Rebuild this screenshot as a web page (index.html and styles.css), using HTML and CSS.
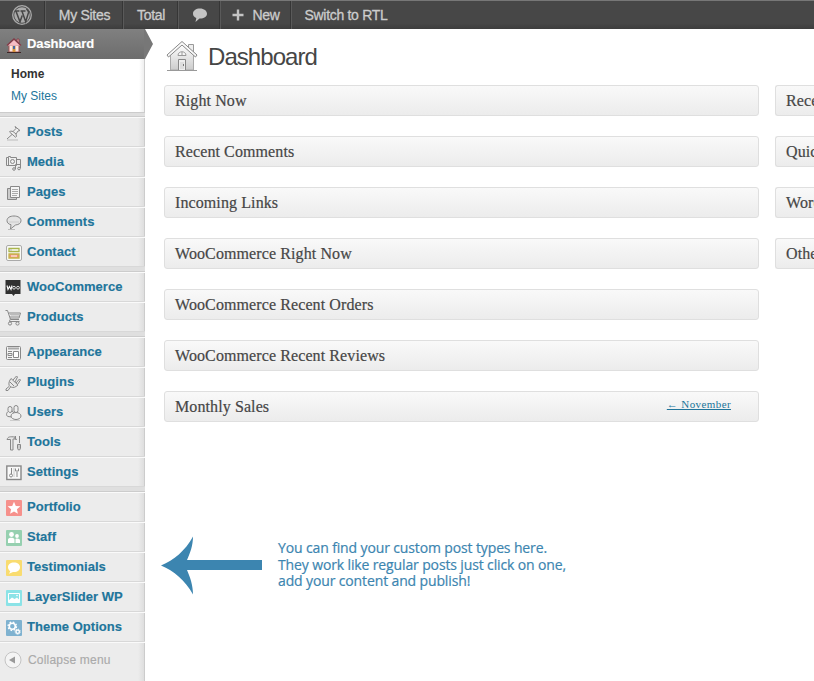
FILE: index.html
```html
<!DOCTYPE html>
<html lang="en">
<head>
<meta charset="utf-8">
<title>Dashboard</title>
<link rel="stylesheet" href="styles.css">
</head>
<body>
<header class="bar">
  <div class="bar-item w-logo"><svg width="22" height="22" viewBox="0 0 22 22"><circle cx="11" cy="11" r="9.3" fill="none" stroke="#aaa" stroke-width="1.3"/><circle cx="11" cy="11" r="7.8" fill="#aaa"/><path d="M3.8 7h4.6M9.5 7h5M5 7.2l4 10.500 2.200-6.300M11 7.200l3.700 10.500 2.800-9c.3-2-1.800-2.500-1.800-4" fill="none" stroke="#464646" stroke-width="1.500"/></svg></div>
  <div class="bar-item w-sites">My Sites</div>
  <div class="bar-item w-total">Total</div>
  <div class="bar-item w-talk"><svg width="16" height="16" viewBox="0 0 16 16"><path d="M8 1.500C4 1.500 1 3.500 1 6.700c0 2 1.300 3.500 3.300 4.300L3.500 15l4-3.500H8c4 0 7-2 7-4.800S12 1.500 8 1.500z" fill="#c4c4c4"/></svg></div>
  <div class="bar-item w-new"><svg width="12" height="12" viewBox="0 0 12 12"><path d="M6 .5v11M.5 6h11" stroke="#c4c4c4" stroke-width="2.400"/></svg><span>New</span></div>
  <div class="bar-item w-rtl">Switch to RTL</div>
</header>
<div class="page">
<nav class="menu">
  <div class="current"><svg class="icon" viewBox="0 0 16 16"><path d="M3 8h10v7H3z" fill="#fde8e2" stroke="#a65555"/><path d="M11 2h2v5h-2z" fill="#e4a5a5" stroke="#813c48" stroke-width=".8"/><path d="M1 8.500L8 2l7 6.500" fill="#f6bdc4" stroke="#813c48" stroke-width="1.500"/><path d="M6.500 9h3v6h-3z" fill="#d8943a"/><path d="M7 9h2v3H7z" fill="#4468a5"/><path d="M1 15.500h14" stroke="#3e2525"/></svg>Dashboard</div>
  <svg class="pointer" viewBox="0 0 9 30"><path d="M0 0h1l8 15-8 15H0z" fill="#777"/></svg>
  <div class="sub"><b>Home</b><span>My Sites</span></div>
  <div class="sep"></div>
  <div class="row"><svg class="icon line" viewBox="0 0 16 16"><path d="M9 1.500l5 4-2 .5-2 3 .5 2.500-1 .7L3.500 7l1-1 2.500.5 3-3z" fill="#eee"/><path d="M6 9.500L1 14M7 6.500l3 2.500"/><path d="M1 15h11" stroke="#bbb"/></svg>Posts</div>
  <div class="row"><svg class="icon line" viewBox="0 0 16 16"><path d="M.5 2.500h2v-1h2v1h6v8H.5zM2.500 2.500v8" fill="#eee"/><circle cx="6.500" cy="6.500" r="2"/><path d="M11 4.500h3.500v8.500M9.500 9.500v4.500M9.500 9.500h5"/><circle cx="8" cy="14" r="1.300"/><circle cx="13" cy="13.500" r="1.300"/></svg>Media</div>
  <div class="row"><svg class="icon line" viewBox="0 0 16 16"><path d="M4 3.500H1.500v11h9V13" fill="#ccc"/><path d="M4.500 1.500h9v11h-9z" fill="#f5f5f5"/><path d="M6 4.500h6M6 6.500h6M6 8.500h6M6 10.500h5" stroke="#aaa"/></svg>Pages</div>
  <div class="row"><svg class="icon line" viewBox="0 0 16 16"><path d="M8 1c-4 0-7 1.600-7 4.700 0 2 1.500 3.500 4 4L4.500 14l5-4c3.500-.3 5.500-2 5.500-4.300C15 3 12 1 8 1z" fill="#e4e4e4"/><path d="M3 7h10" stroke="#ccc"/><path d="M2 14.500h7" stroke="#bbb"/></svg>Comments</div>
  <div class="row"><svg class="icon" viewBox="0 0 16 16"><rect x=".5" y=".5" width="15" height="15" rx="1.500" fill="#f9f9f6" stroke="#aaa"/><path d="M3 3.500h10v3H3z" fill="#fff" stroke="#a9b54b" stroke-width="1.300"/><path d="M5 4.500v1" stroke="#888"/><path d="M3 9h10v4H3z" fill="#f49276" stroke="#c3b44a" stroke-width="1.300"/><path d="M5 11h6" stroke="#fff"/></svg>Contact</div>
  <div class="sep"></div>
  <div class="row"><svg class="icon left" viewBox="0 0 16 16"><path d="M.5 0h15v14h-5.500l-1.500 2L7 14H.5z" fill="#303030"/><path d="M2 5.500l1 4 1.500-3 1.500 3 1-4" fill="none" stroke="#fff" stroke-width="1.100"/><circle cx="9" cy="7.700" r="1.400" fill="none" stroke="#ddd"/><circle cx="13" cy="7.700" r="1.400" fill="none" stroke="#ddd"/></svg>WooCommerce</div>
  <div class="row"><svg class="icon line left" viewBox="0 0 16 16"><path d="M.5.5h2l3 9H14M3.500 3h12l-1.500 5H5M5 9.500l-.5 2h10"/><path d="M5 4.500h10M5 6.500h9M7 3v5M9 3v5M11 3v5M13 3v5" stroke="#bbb"/><circle cx="5" cy="13.500" r="1.600"/><circle cx="12.500" cy="13.500" r="1.600"/></svg>Products</div>
  <div class="sep"></div>
  <div class="row"><svg class="icon line" viewBox="0 0 16 16"><rect x=".5" y="1.500" width="14" height="13" rx="1" fill="#f4f4f4"/><path d="M2 3.500h11" stroke-width="2" stroke="#aaa"/><path d="M7.500 6.500h5v6h-5z" fill="#fff"/><path d="M2 6.500h4M2 8.500h4v2H2zM2 12.500h4"/></svg>Appearance</div>
  <div class="row"><svg class="icon line left" viewBox="0 0 16 16"><path d="M5 5l1-1.500 7 6.500-2 1.500c-2 1.500-4.500 1-6 0s-1.500-4 0-6.500z" fill="#e8e8e8"/><path d="M8 5l3.500-4 1 1L10 7M11 8l3.500-4 1 1L12.500 9.500M5 7l4 4M4 11.500L1 14v1.500h2L5.500 12"/></svg>Plugins</div>
  <div class="row"><svg class="icon line" viewBox="0 0 16 16"><rect x="2" y="1.500" width="4" height="6" rx="2" fill="#eee"/><rect x="8" y=".5" width="4" height="7" rx="2" fill="#eee"/><path d="M2.500 6.500C0 7.500 0 11 2 11.500l4 .5M6 5.500l2 3" fill="#eee"/><ellipse cx="10" cy="11" rx="5" ry="3.500" fill="#f0f0f0"/><path d="M4 15.500h10" stroke="#ccc"/></svg>Users</div>
  <div class="row"><svg class="icon line" viewBox="0 0 16 16"><path d="M1 4.500c1-3 3-3 8-2.500v2H7v11H4.500V4.500zM13.500 1v7" fill="#e6e6e6"/><path d="M9.500 1v3.500h1.300M11.500 9.500h3v4l-1 1.500h-1l-1-1.500z" fill="#ccc"/></svg>Tools</div>
  <div class="row"><svg class="icon line" viewBox="0 0 16 16"><rect x=".8" y="1" width="14.200" height="13.500" fill="#f9f9f9" stroke-width="1.400"/><path d="M5.500 3v6M11 7v5"/><path d="M8 3v9" stroke="#ccc"/><circle cx="5" cy="10.500" r="1.500"/><path d="M9.500 3.500v2.500h3V3.500"/></svg>Settings</div>
  <div class="sep"></div>
  <div class="row"><svg class="icon" viewBox="0 0 16 16"><rect width="16" height="16" rx="1" fill="#f6918c"/><path d="M8 1.700l1.800 4.200 4.600.4-3.500 3 1 4.500L8 11.400l-3.900 2.400 1-4.500-3.500-3 4.600-.4z" fill="#fff"/></svg>Portfolio</div>
  <div class="row"><svg class="icon" viewBox="0 0 16 16"><rect width="16" height="16" rx="1" fill="#96d0b0"/><circle cx="5.500" cy="4.500" r="2.400" fill="#fff"/><circle cx="11" cy="6" r="1.900" fill="#fff"/><path d="M2 13V9.500C2 7 8.500 7 8.500 9.500V13zM9.500 13V9c2-1 4.500-.3 4.500 1.500V13z" fill="#fff"/></svg>Staff</div>
  <div class="row"><svg class="icon" viewBox="0 0 16 16"><rect width="16" height="16" rx="1" fill="#f9dc70"/><path d="M8 2.500c-3.500 0-6 2-6 4.700 0 1.800 1 3.100 2.300 4L3 13.800l4-1.800c4 .5 7-1.500 7-4.800 0-2.700-2.500-4.700-6-4.700z" fill="#fff"/></svg>Testimonials</div>
  <div class="row"><svg class="icon" viewBox="0 0 16 16"><rect width="16" height="16" rx="1" fill="#8be3e7"/><path d="M2.500 3.500h11v9h-11z" fill="none" stroke="#fff"/><path d="M3 10l3-2.500 2.500 1.500L11 7.500l2.500 2.500v2.500H3z" fill="#fff"/><circle cx="11" cy="5.500" r=".8" fill="#fff"/></svg>LayerSlider WP</div>
  <div class="row"><svg class="icon" viewBox="0 0 16 16"><rect width="16" height="16" rx="1" fill="#7fb2d0"/><circle cx="6.300" cy="6.300" r="3" fill="none" stroke="#fff" stroke-width="1.600"/><circle cx="6.300" cy="6.300" r="4.200" fill="none" stroke="#fff" stroke-width="1.300" stroke-dasharray="1.650 1.650"/><circle cx="11.700" cy="11.700" r="1.700" fill="none" stroke="#fff" stroke-width="1.400"/><circle cx="11.700" cy="11.700" r="2.600" fill="none" stroke="#fff" stroke-dasharray="1.020 1.020"/></svg>Theme Options</div>
  <div class="collapse"><svg width="18" height="18" viewBox="0 0 18 18"><circle cx="9" cy="9" r="8" fill="#f4f4f4" stroke="#c4c4c4"/><path d="M5 9l6-3.500v7z" fill="#999"/></svg>Collapse menu</div>
</nav>
<main class="main">
  <div class="title"><svg width="32" height="32" viewBox="0 0 32 32"><defs><linearGradient id="wall" x2="0" y2="1"><stop stop-color="#fff"/><stop offset="1" stop-color="#ccc"/></linearGradient></defs><path d="M22.500 4.500h5v10h-5z" fill="#eee" stroke="#999"/><path d="M4.500 14L16 4l11.500 10v16h-23z" fill="url(#wall)" stroke="#aaa"/><path d="M16 1.500L1 15l1.500 2L16 5l13.500 12 1.500-2z" fill="#fafafa" stroke="#888"/><path d="M12 15.500c0-5 8-5 8 0zM16 12v3" fill="#f6f6f6" stroke="#999"/><path d="M12.500 19.500h7v11h-7z" fill="#eee" stroke="#888"/><path d="M14 22h4v7h-4z" fill="#ddd"/><path d="M17.500 24v2" stroke="#777"/><path d="M1 30.500h30" stroke="#999"/></svg><h1>Dashboard</h1></div>
  <div class="columns">
    <section class="col wide">
      <div class="box">Right Now</div>
      <div class="box">Recent Comments</div>
      <div class="box">Incoming Links</div>
      <div class="box">WooCommerce Right Now</div>
      <div class="box">WooCommerce Recent Orders</div>
      <div class="box">WooCommerce Recent Reviews</div>
      <div class="box">Monthly Sales<a>← November</a></div>
    </section>
    <section class="col side">
      <div class="box">Recent</div>
      <div class="box">Quick</div>
      <div class="box">Word</div>
      <div class="box">Other</div>
    </section>
  </div>
  <div class="note"><svg width="101" height="59" viewBox="0 0 101 59"><path d="M0 29.500C13 24 24 15 32 .5c0 9-3 17-6 23.500h75v10H26c3 7 6 15 6 24.500C24 44 13 35 0 29.500z" fill="#3c85b0"/></svg><p>You can find your custom post types here.<br>They work like regular posts just click on one,<br>add your content and publish!</p></div>
</main>
</div>
</body>
</html>
```
FILE: styles.css
```css
* { box-sizing: border-box; }
body { margin: 0; width: 814px; height: 681px; overflow: hidden; background: #fff; font: 13px "Liberation Sans", sans-serif; }
svg { display: block; flex: none; }
.bar { display: flex; height: 29px; background: linear-gradient(#474747 80%, #3d3d3d); border-top: 1px solid #777; color: #ccc; font-size: 14px; letter-spacing: -.3px; -webkit-text-stroke: .3px #ccc; }
.bar-item { display: flex; align-items: center; justify-content: center; border-right: 1px solid #5a5a5a; box-shadow: inset -1px 0 #363636; white-space: nowrap; }
.w-logo { width: 46px; padding-right: 2px; }
.w-sites { width: 78px; }
.w-total { width: 55px; }
.w-talk { width: 42px; }
.w-new { width: 71px; gap: 8px; }
.w-rtl { width: 108px; border: 0; box-shadow: none; }
.page { display: flex; height: 652px; }
.menu { position: relative; width: 145px; flex: none; background: linear-gradient(90deg, transparent 138px, #dedede 144px, #ccc 144px), #ececec; color: #21759b; font-weight: bold; letter-spacing: .03px; -webkit-text-stroke: .15px; }
.current { display: flex; gap: 5px; height: 30px; padding-left: 6px; line-height: 30px; color: #fff; background: linear-gradient(#808080, #6d6d6d); letter-spacing: -.1px; }
.pointer { position: absolute; left: 144px; top: 0; width: 9px; height: 30px; }
.icon { width: 16px; height: 16px; margin-top: 8px; }
.left { margin-left: -1px; margin-right: 1px; }
.line { fill: none; stroke: #888; }
.sub { display: flex; flex-direction: column; height: 53px; padding: 4px 0 0 11px; line-height: 22px; font-size: 12px; background: linear-gradient(90deg, #fff 139px, #eee 144px, #ccc 144px); letter-spacing: 0; -webkit-text-stroke: 0; }
.sub b { color: #333; }
.sub span { font-weight: normal; }
.sep { height: 5px; background: #dfdfdf; border-bottom: 1px solid #ccc; }
.sub + .sep { border-top: 1px solid #ccc; }
.row { display: flex; gap: 5px; height: 30px; padding-left: 6px; line-height: 28px; border-top: 1px solid #fafafa; border-bottom: 1px solid #d8d8d8; white-space: nowrap; }
.row .icon { margin-top: 7px; }
.collapse { display: flex; align-items: center; gap: 6px; height: 34px; padding-left: 4px; border-top: 1px solid #fafafa; color: #aaa; font-size: 12px; font-weight: normal; letter-spacing: .2px; }
.main { flex: 1; min-width: 0; padding: 11px 0 0 19px; }
.title { display: flex; gap: 10px; height: 45px; padding-left: 2px; }
h1 { margin: 0; color: #464646; font-size: 24px; line-height: 34px; font-weight: normal; letter-spacing: -.95px; }
.columns { display: flex; gap: 16px; height: 337px; }
.col { display: flex; flex-direction: column; gap: 20px; }
.wide { flex: none; width: 595px; }
.side { flex: 1; min-width: 0; overflow: hidden; }
.box { display: flex; flex: none; justify-content: space-between; height: 31px; padding: 0 27px 0 10px; border: 1px solid #dfdfdf; border-radius: 3px; background: linear-gradient(#f9f9f9, #ececec); color: #464646; font: 16px/30px "Liberation Serif", serif; letter-spacing: .1px; white-space: nowrap; -webkit-text-stroke: .2px #464646; }
.side .box { padding-right: 0; border-right: 0; border-radius: 3px 0 0 3px; }
.box a { color: #21759b; font-size: 11px; line-height: 25px; text-decoration: underline; letter-spacing: .4px; -webkit-text-stroke: 0; }
.note { display: flex; gap: 16px; margin: 114px 0 0 -3px; }
.note p { margin: 4px 0 0; color: #3c85b0; font: 14px/16.5px "Open Sans", sans-serif; letter-spacing: -.13px; white-space: nowrap; -webkit-text-stroke: .2px; }
```
